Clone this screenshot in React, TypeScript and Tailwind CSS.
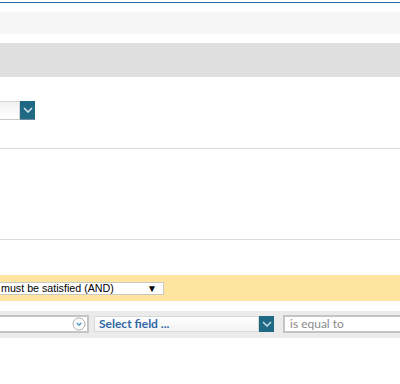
import React from "react";

const Chevron = ({ className = "" }: { className?: string }) => (
  <svg width="10" height="6" viewBox="0 0 10 6" className={className}>
    <path d="M1 1 L5 5 L9 1" fill="none" stroke="currentColor" strokeWidth="1.5" />
  </svg>
);

const App = () => {
  return (
    <div className="w-[400px] h-[384px] bg-white overflow-hidden font-['Liberation_Sans',Arial,sans-serif]">
      <div className="h-[2px]" />
      <div className="h-px bg-[#2d6aa0]" />
      <div className="h-[9px]" />
      <div className="h-[22px] bg-[#f7f7f7]" />
      <div className="h-[9px]" />
      <div className="h-[34px] bg-[#dfdfdf]" />

      {/* dropdown */}
      <div className="pt-[24px] flex h-[71px]">
        <div className="w-[20px] h-[19px] border border-l-0 border-[#d4d4d4] border-b-[#c8c8c8] bg-gradient-to-b from-[#f2f2f2] to-white" />
        <div className="w-[15px] h-[19px] bg-[#1f6985] flex items-center justify-center text-[#d8e6ee] border-b border-[#6b8fa0]">
          <Chevron />
        </div>
      </div>

      <div className="h-px bg-[#dcdcdc]" />
      <div className="h-[90px]" />
      <div className="h-px bg-[#dcdcdc]" />
      <div className="h-[35px]" />

      {/* condition selector */}
      <div className="h-[26px] bg-[#ffe6a0] pt-[7px]">
        <div className="w-[164px] h-[13px] bg-white border border-l-0 border-[#c8c8c8] flex items-center justify-between pr-[6px] text-[10.7px] leading-none text-black">
          <span className="pl-[1px]">must be satisfied (AND)</span>
          <span className="text-[10px]">▼</span>
        </div>
      </div>

      <div className="h-[10px]" />

      {/* filter row */}
      <div className="h-[27px] bg-[#ebebeb] flex items-start pt-[4px] font-['Lato',sans-serif]">
        <div className="shrink-0 w-[89px] h-[18px] bg-white border-2 border-l-0 border-[#c4c4c4] flex items-center justify-end pr-[1px]">
          <svg width="14" height="14" viewBox="0 0 14 14">
            <circle cx="7" cy="7" r="6" fill="#fafafa" stroke="#b0b0b0" strokeWidth="1" />
            <path d="M4.8 6 L7 8.2 L9.2 6" fill="none" stroke="#3c8ec2" strokeWidth="1.2" />
          </svg>
        </div>
        <div className="shrink-0 ml-[5px] mt-[1px] flex">
          <div className="w-[165px] h-[16px] border border-[#d8d8d8] bg-gradient-to-b from-white to-[#f3f3f3] flex items-center pl-[4px] text-[12px] font-bold text-[#2e67a6] leading-none">
            Select field ...
          </div>
          <div className="w-[15px] h-[16px] bg-[#1f6985] flex items-center justify-center text-[#c6dbe6]">
            <Chevron />
          </div>
        </div>
        <div className="shrink-0 ml-[9px] w-[130px] h-[18px] bg-white border-2 border-r-0 border-[#c4c4c4] flex items-center pl-[5px] text-[12px] text-[#8a8a8a] leading-none">
          is equal to
        </div>
      </div>
    </div>
  );
};

export default App;
